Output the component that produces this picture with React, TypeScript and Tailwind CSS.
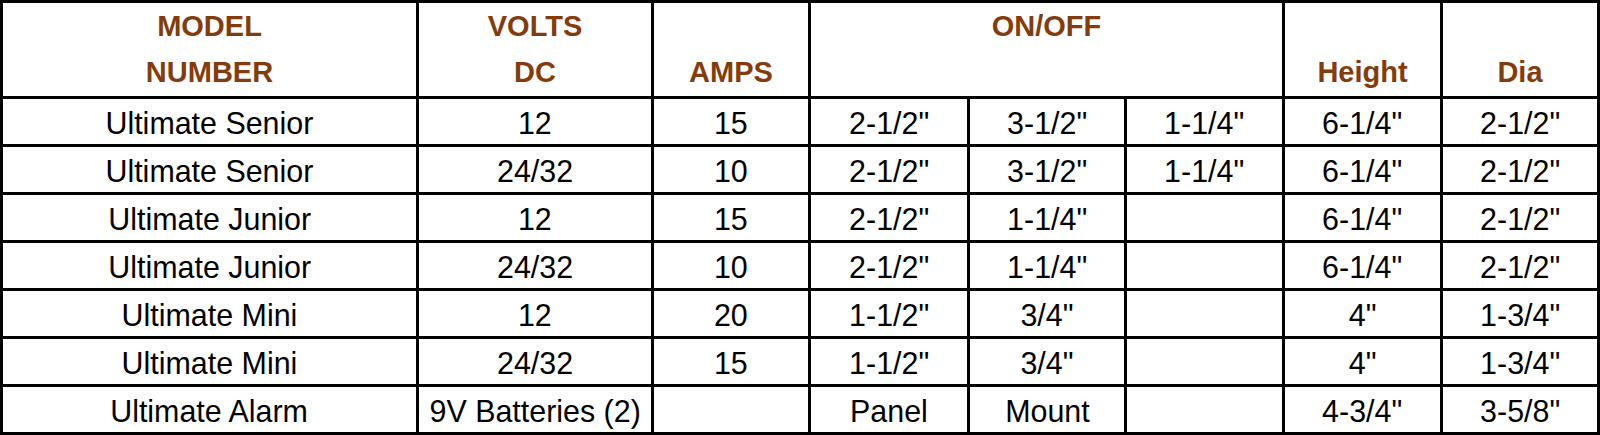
import React from "react";

type Row = [string, string, string, string, string, string, string, string];

const rows: Row[] = [
  ["Ultimate Senior", "12", "15", '2-1/2"', '3-1/2"', '1-1/4"', '6-1/4"', '2-1/2"'],
  ["Ultimate Senior", "24/32", "10", '2-1/2"', '3-1/2"', '1-1/4"', '6-1/4"', '2-1/2"'],
  ["Ultimate Junior", "12", "15", '2-1/2"', '1-1/4"', "", '6-1/4"', '2-1/2"'],
  ["Ultimate Junior", "24/32", "10", '2-1/2"', '1-1/4"', "", '6-1/4"', '2-1/2"'],
  ["Ultimate Mini", "12", "20", '1-1/2"', '3/4"', "", '4"', '1-3/4"'],
  ["Ultimate Mini", "24/32", "15", '1-1/2"', '3/4"', "", '4"', '1-3/4"'],
  ["Ultimate Alarm", "9V Batteries (2)", "", "Panel", "Mount", "", '4-3/4"', '3-5/8"'],
];

function HeaderCell({
  top,
  bottom,
  className = "",
}: {
  top?: string;
  bottom?: string;
  className?: string;
}) {
  return (
    <div className={`bg-white flex flex-col text-[#843c0c] font-bold text-[29px] ${className}`}>
      <div className="h-[46px] leading-[46px] text-center">{top ?? ""}</div>
      <div className="h-[46px] leading-[46px] text-center">{bottom ?? ""}</div>
    </div>
  );
}

export default function App() {
  return (
    <div
      className="w-[1600px] h-[435px] bg-white"
      style={{ fontFamily: '"Liberation Sans", Arial, sans-serif' }}
    >
      <div className="grid grid-cols-[413px_232px_154px_156px_154px_155px_155px_154px] grid-rows-[93px_repeat(7,45px)] gap-[3px] p-[3px] bg-black w-[1600px] h-[435px]">
        <HeaderCell top="MODEL" bottom="NUMBER" />
        <HeaderCell top="VOLTS" bottom="DC" />
        <HeaderCell bottom="AMPS" />
        <HeaderCell top="ON/OFF" className="col-span-3" />
        <HeaderCell bottom="Height" />
        <HeaderCell bottom="Dia" />
        {rows.map((r, i) =>
          r.map((c, j) => (
            <div
              key={`${i}-${j}`}
              className="bg-white flex items-center justify-center text-[32px] text-black leading-none whitespace-nowrap pt-[2px]"
            >
              <span className="inline-block scale-x-[0.95]">{c}</span>
            </div>
          ))
        )}
      </div>
    </div>
  );
}
